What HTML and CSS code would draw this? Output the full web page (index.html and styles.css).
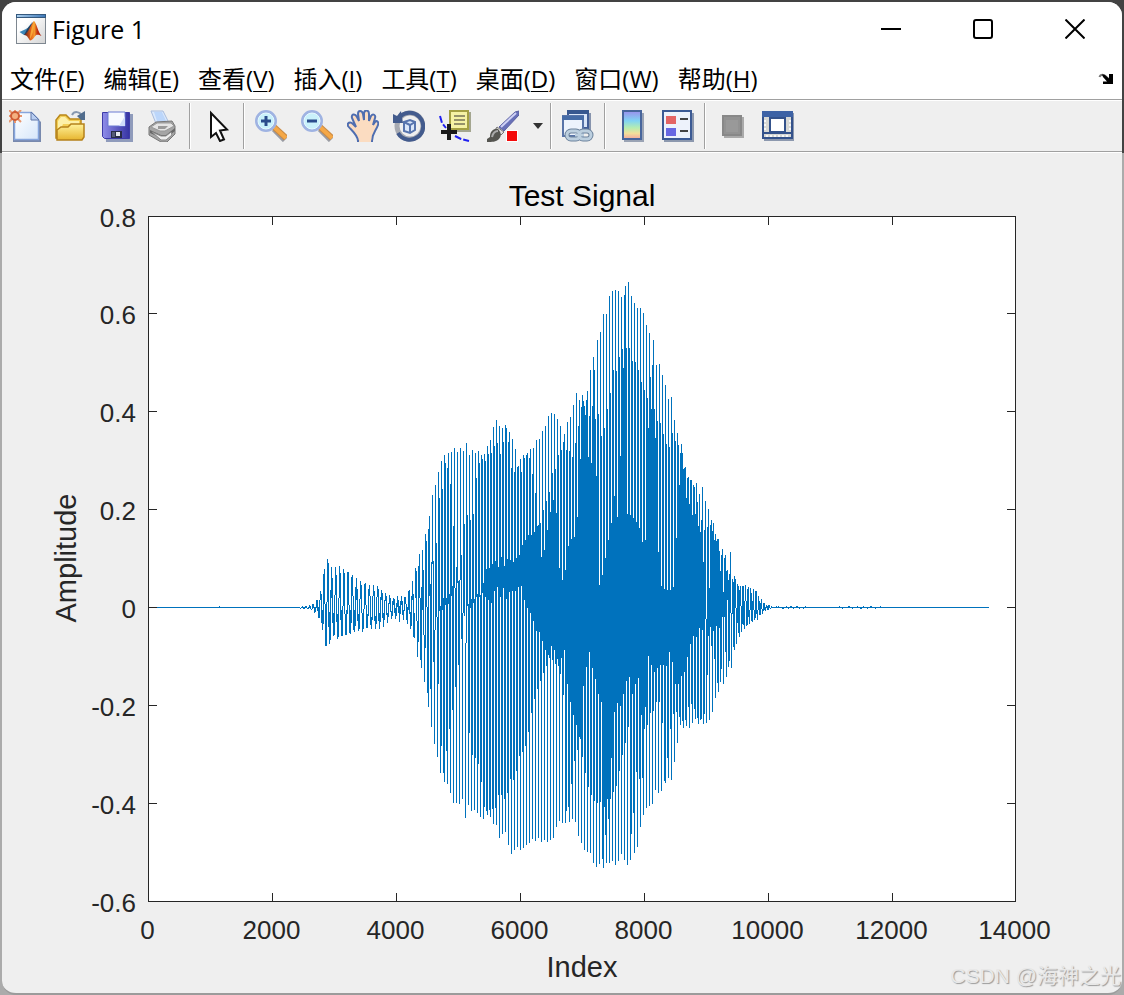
FILE: index.html
```html
<!DOCTYPE html>
<html lang="zh">
<head>
    <meta charset="UTF-8">
    <meta name="viewport" content="width=device-width, initial-scale=1.0">
    <title>Figure 1</title>
    <link rel="stylesheet" href="styles.css">
</head>
<body>
    <div class="window">
        <header class="title-bar">
            <svg class="logo" viewBox="0 0 30 30">
                <defs>
                    <linearGradient id="logoBg" x1="0" y1="0" x2="1" y2="1"><stop offset="0.3" stop-color="#fff"/><stop offset="1" stop-color="#d4d4d4"/></linearGradient>
                    <linearGradient id="logoBar"><stop offset="0" stop-color="#a9cdec"/><stop offset="1" stop-color="#3f79b8"/></linearGradient>
                    <linearGradient id="logoFire" x1="0" x2="1"><stop offset="0" stop-color="#5b1c1c"/><stop offset="0.4" stop-color="#e8641b"/><stop offset="0.6" stop-color="#f49a2c"/><stop offset="0.75" stop-color="#c3320f"/><stop offset="1" stop-color="#a8200d"/></linearGradient>
                </defs>
                <rect x="0.5" y="0.5" width="29" height="29" fill="url(#logoBg)" stroke="#7e8790"/>
                <rect x="0" y="0" width="30" height="4" fill="#35597e"/>
                <rect x="1" y="1" width="28" height="2" fill="url(#logoBar)"/>
                <path d="M3.500 18 9 15.500 11.500 14 14 11 16 8 14 15 11 19.500 8 21z" fill="#3d86b8"/>
                <path d="M8 21 11.500 14.500 14 11.500 17.500 7.500 15 18 12 21z" fill="#27405f"/>
                <path d="M8 21C12 20 15 10 18 7 20.500 9 22 18 25.500 22 22 20.500 20.500 20 18.500 23 17 25 15.500 26.500 14 26.500 12.500 25 12 21.500 8 21z" fill="url(#logoFire)"/>
                <path d="M18 7C19 12 17 20 14 25 14 20 16 12 18 7z" fill="#f7a636"/>
            </svg>
            <h1>Figure 1</h1>
            <div class="window-buttons">
                <button aria-label="最小化"><svg viewBox="0 0 20 20"><path d="M0 10h20"/></svg></button>
                <button aria-label="最大化"><svg viewBox="0 0 20 20"><rect x="1" y="1" width="18" height="18" rx="2"/></svg></button>
                <button aria-label="关闭"><svg viewBox="0 0 20 20"><path d="M0.500 0.500l19 19M19.500 0.500l-19 19"/></svg></button>
            </div>
        </header>

        <nav class="menu-bar">
            <button>文件(<u>F</u>)</button>
            <button>编辑(<u>E</u>)</button>
            <button>查看(<u>V</u>)</button>
            <button>插入(<u>I</u>)</button>
            <button>工具(<u>T</u>)</button>
            <button>桌面(<u>D</u>)</button>
            <button>窗口(<u>W</u>)</button>
            <button>帮助(<u>H</u>)</button>
            <button class="dock" aria-label="停靠">
                <svg viewBox="0 0 16 12"><path d="M1.500 4C2.500 1 6 1 8.500 4L11.500 7" fill="none" stroke="#777" stroke-width="2"/><path d="M4 1.500C7 1 8 3 11 5.500V1h4v10H5V8.500h4L5 4z" fill="#000"/></svg>
            </button>
        </nav>

        <div class="toolbar">
            <button aria-label="新建图窗">
                <svg viewBox="0 0 32 32">
                    <defs><linearGradient id="paper" x1="0" y1="0" x2="1" y2="1"><stop offset="0" stop-color="#fff"/><stop offset="1" stop-color="#d6e6fa"/></linearGradient></defs>
                    <path d="M7 4h17l8 8v20H4V8z" fill="#7889ad"/>
                    <path d="M5.500 3.500V29.500H29.500V9.500L22.500 2.500H6z" fill="url(#paper)" stroke="#86a5dc" stroke-width="1.500"/>
                    <path d="M22 2v8h8z" fill="#b7cdf1" stroke="#6177a8"/>
                    <path d="M0 0l12 12M12 0L0 12M6-1v14M-1 6h14" stroke="#e7976f" stroke-width="2"/>
                    <circle cx="6" cy="6" r="4" fill="#f4b080" stroke="#cf5b33" stroke-width="2"/>
                </svg>
            </button>
            <button aria-label="打开文件">
                <svg viewBox="0 0 32 32">
                    <defs><linearGradient id="folder" x1="0" y1="0" x2="0" y2="1"><stop offset="0" stop-color="#fff29b"/><stop offset="1" stop-color="#e7b52f"/></linearGradient></defs>
                    <path d="M1 28V10l4-5h6l4 4h11v19z" fill="#f3cf57" stroke="#b98719" stroke-width="1.500"/>
                    <path d="M3 26V11l3-4h4l4 4h10v3H8z" fill="#fdf0a8"/>
                    <path d="M2 30V20l4-3h7l3-3h13v13l-2 3z" fill="url(#folder)" stroke="#b5811b" stroke-width="1.500"/>
                    <path d="M17 5C19 1 25 1 27 6" fill="none" stroke="#8798b0" stroke-width="2"/>
                    <path d="M22 6l4 4h4V1z" fill="#526d8d"/>
                </svg>
            </button>
            <button aria-label="保存图窗">
                <svg viewBox="0 0 32 32">
                    <defs><linearGradient id="disk" x1="0" x2="1"><stop offset="0" stop-color="#8f8de9"/><stop offset="1" stop-color="#3533a2"/></linearGradient></defs>
                    <path d="M4 4h28v28H5z" fill="#8f9bbb"/>
                    <path d="M1.500 2.500h27v26h-25l-2-2z" fill="url(#disk)" stroke="#3d3ba8"/>
                    <path d="M7 2h17v14H7z" fill="#f7faff" stroke="#6b7ad3"/>
                    <path d="M18 16h6V6z" fill="#cfdcfa"/>
                    <path d="M10 21h11v7H10z" fill="#282c46"/>
                    <path d="M15 22h4v4h-4z" fill="#e6e7ee"/><path d="M11 22h3v5h-3z" fill="#555b75"/>
                </svg>
            </button>
            <button aria-label="打印图窗">
                <svg viewBox="0 0 32 32">
                    <path d="M4 1h12l6 12-12 3z" fill="#dbe9fc" stroke="#a9bcdc"/>
                    <path d="M7 2h8l4 9-8 3z" fill="#bcd6fa"/>
                    <path d="M2 17 9 12l16-1 3 5v8l-8 8h-6L2 25z" fill="#a5a5a5" stroke="#777"/>
                    <path d="M4 17 10 13h14l3 3-9 5h-5z" fill="#e4e4e4" stroke="#999"/>
                    <path d="M3 20l11 5h5l9-7v3l-9 7h-5L3 23z" fill="#696969"/>
                    <path d="M5 22l9 4h5l5-4 1 3-6 5h-5z" fill="#eee" stroke="#888"/>
                    <path d="M11 16h10l-3 3h-7z" fill="#999"/>
                </svg>
            </button>
            <span class="separator"></span>
            <button aria-label="编辑绘图">
                <svg viewBox="0 0 32 32">
                    <path d="M10 3V27l5-4 4 8 4-1.500-4-9 7-1z" fill="#fff" stroke="#111" stroke-width="2"/>
                </svg>
            </button>
            <span class="separator"></span>
            <button aria-label="放大">
                <svg viewBox="0 0 32 32">
                    <path d="M19 19l11 11" stroke="#9a9ca4" stroke-width="6"/>
                    <path d="M19 17l12 11" stroke="#c98a45" stroke-width="6"/>
                    <path d="M19 17l12 11" stroke="#f5a847" stroke-width="4"/>
                    <circle cx="11" cy="11" r="9.500" fill="#c9f1fb" stroke="#9fb3e2" stroke-width="3"/>
                    <circle cx="11" cy="11" r="8" fill="none" stroke="#e6faff"/>
                    <path d="M6 11h10M11 6v10" stroke="#2a4c8c" stroke-width="3"/>
                </svg>
            </button>
            <button aria-label="缩小">
                <svg viewBox="0 0 32 32">
                    <path d="M19 19l11 11" stroke="#9a9ca4" stroke-width="6"/>
                    <path d="M19 17l12 11" stroke="#c98a45" stroke-width="6"/>
                    <path d="M19 17l12 11" stroke="#f5a847" stroke-width="4"/>
                    <circle cx="11" cy="11" r="9.500" fill="#c9f1fb" stroke="#9fb3e2" stroke-width="3"/>
                    <circle cx="11" cy="11" r="8" fill="none" stroke="#e6faff"/>
                    <path d="M6 11h10" stroke="#2a4c8c" stroke-width="3"/>
                </svg>
            </button>
            <button aria-label="平移">
                <svg viewBox="0 0 32 32">
                    <path d="M11 31C11 25 4 20 1 16 0 13 3 11 6 14L9 17 5 8C4 4 8 3 10 7l2 4-1-7C11 0 15 0 16 4l1 6 0-7C18-1 22 0 22 4v7l2-5C26 3 29 5 28 8l-2 7 2-3c2-2 4 0 3 3-2 6-6 8-6 16z" fill="#fbdcc1" stroke="#4f6eb0" stroke-width="2"/>
                    <path d="M12 32C13 26 9 22 7 19h18l-1 13z" fill="#fbdcc1"/>
                </svg>
            </button>
            <button aria-label="三维旋转">
                <svg viewBox="0 0 32 32">
                    <circle cx="17" cy="16" r="13" fill="none" stroke="#a7aab2" stroke-width="5"/>
                    <path d="M6 8A13.500 13.500 0 1 1 5 23" fill="none" stroke="#435b8d" stroke-width="4"/>
                    <path d="M0 13V4l4 2 4-5 2 12z" fill="#435b8d"/>
                    <path d="M11 12l6-2 5 2v8l-5 3-6-2z" fill="#dbe7f9" stroke="#5875ae" stroke-width="2"/>
                    <path d="M11 12l6 3 5-3M17 15v8" fill="none" stroke="#5875ae" stroke-width="2"/>
                </svg>
            </button>
            <button aria-label="数据游标">
                <svg viewBox="0 0 32 32">
                    <path d="M12 2h20v20H13z" fill="#a4a690"/>
                    <path d="M11 1h18v18H11z" fill="#f5f2a4" stroke="#a4a042" stroke-width="2"/>
                    <path d="M15 6h11M15 10h11M15 14h11" stroke="#95926a" stroke-width="2"/>
                    <path d="M1 6l2 7 4 5M16 26l6 3 8 2" fill="none" stroke="#2020f0" stroke-width="2" stroke-dasharray="7 2"/>
                    <path d="M2 22h16M10 14v16" stroke="#1a1a1a" stroke-width="4"/>
                </svg>
            </button>
            <button class="brush" aria-label="刷亮数据">
                <svg viewBox="0 0 32 32">
                    <path d="M12 17 28 2l4-1v4L17 21z" fill="#6870b8" stroke="#5a5fa0"/>
                    <path d="M14 17 29 3" stroke="#cfd1f5" stroke-width="2"/>
                    <path d="M10 17l7 5-3 3-6-5z" fill="#ddd" stroke="#777"/>
                    <path d="M0 32v-3l3-2c0-5 3-9 8-8 3 3 4 7 1 10-3 3-7 3-12 3z" fill="#555550"/>
                    <path d="M5 27c1-4 3-6 6-6" stroke="#aaa" stroke-width="2" fill="none"/>
                    <rect x="19" y="20" width="12" height="12" fill="#fff"/><rect x="20" y="21" width="10" height="10" fill="#f40b0b"/>
                </svg>
            </button>
            <button class="drop-down" aria-label="刷亮选项">
                <svg viewBox="0 0 10 6"><path d="M0 0h10L5 6z" fill="#333"/></svg>
            </button>
            <span class="separator"></span>
            <button aria-label="链接绘图">
                <svg viewBox="0 0 32 32">
                    <path d="M6 1h20v17H6z" fill="#d9e5f7" stroke="#415d96" stroke-width="2"/>
                    <path d="M5 0h22v4H5z" fill="#37578f"/><path d="M28 3v17" stroke="#8794ad" stroke-width="2"/>
                    <path d="M1 6h20v20H1z" fill="#edf3fc" stroke="#5874a8" stroke-width="2"/>
                    <path d="M0 6h22v4H0z" fill="#456ba6"/>
                    <g fill="none" stroke="#6c829c" stroke-width="5"><rect x="5" y="21" width="13" height="8" rx="4"/><rect x="17" y="21" width="12" height="8" rx="4"/></g>
                    <g fill="none" stroke="#bccfdf" stroke-width="3"><rect x="5" y="21" width="13" height="8" rx="4"/><rect x="17" y="21" width="12" height="8" rx="4"/><path d="M13 25h9"/></g>
                </svg>
            </button>
            <span class="separator"></span>
            <button aria-label="插入颜色栏">
                <svg viewBox="0 0 32 32">
                    <defs><linearGradient id="colors" x1="0" y1="0" x2="0" y2="1"><stop offset="0" stop-color="#9a8eec"/><stop offset="0.350" stop-color="#80d4f4"/><stop offset="0.600" stop-color="#b5edb1"/><stop offset="0.800" stop-color="#f3df9b"/><stop offset="1" stop-color="#f3a69f"/></linearGradient></defs>
                    <path d="M8 3h20v29H8z" fill="#9aa3b4"/>
                    <path d="M7 1h18v28H7z" fill="url(#colors)" stroke="#47659c" stroke-width="2"/>
                </svg>
            </button>
            <button aria-label="插入图例">
                <svg viewBox="0 0 32 32">
                    <path d="M2 3h30v29H2z" fill="#8c98ae"/>
                    <path d="M1 1h28v28H1z" fill="#edf2fb" stroke="#3b5a94" stroke-width="2"/>
                    <path d="M4 6h10v8H4z" fill="#e36464"/><path d="M4 18h10v8H4z" fill="#6767e2"/>
                    <path d="M18 9h8M18 21h8" stroke="#444" stroke-width="2"/>
                </svg>
            </button>
            <span class="separator"></span>
            <button aria-label="隐藏绘图工具">
                <svg viewBox="0 0 32 32">
                    <path d="M8 7h20v21H8z" fill="#aaa"/><path d="M7 6h18v19H7z" fill="#929292" stroke="#888" stroke-width="2"/><path d="M10 10h12v12H10z" fill="#999"/>
                </svg>
            </button>
            <button aria-label="显示绘图工具">
                <svg viewBox="0 0 32 32">
                    <path d="M2 3h30v28H2z" fill="#8c98ae"/>
                    <path d="M1 2h29v26H1z" fill="#d7d8d5" stroke="#34528b" stroke-width="2"/>
                    <path d="M0 1h31v6H0z" fill="#3d62a5"/>
                    <path d="M3 10v12M28 10v12M4 26h23" stroke="#f8f8f8" stroke-width="2" stroke-dasharray="2 2"/>
                    <path d="M8 8h15v14H8z" fill="#fff" stroke="#34528b" stroke-width="2"/><path d="M1 23h29" stroke="#34528b" stroke-width="2"/>
                </svg>
            </button>
        </div>

        <main class="figure">
            <svg id="plot" viewBox="2 153 1120 840" role="img" aria-label="Test Signal">
                <rect class="axes" x="148.500" y="216.500" width="867" height="685"/>
                <path id="signal" class="signal"/>
                <path id="ticks" class="ticks"/>
                <g id="tickLabels" class="tick-labels"></g>
                <text class="plot-title" x="582" y="206">Test Signal</text>
                <text class="axis-label" x="582" y="977">Index</text>
                <text class="axis-label" transform="translate(76 558) rotate(-90)">Amplitude</text>
            </svg>
            <div class="watermark">CSDN @海神之光</div>
        </main>
    </div>
    <script src="plot.js"></script>
</body>
</html>
```

FILE: styles.css
```css
* {
    box-sizing: border-box;
}
body {
    margin: 0;
    min-height: 100vh;
    padding: 2px 2px 1px;
    display: flex;
    background: linear-gradient(#434343 153px, #ababab 153px);
    font-family: "Open Sans", "Noto Sans CJK SC", sans-serif;
    color: #000;
}
button {
    padding: 0;
    border: none;
    background: none;
    color: inherit;
    font: inherit;
}
.window {
    flex: 1;
    display: flex;
    flex-direction: column;
    overflow: hidden;
    background: #efefef;
    border-bottom: 2px solid #9b9b9b;
    border-radius: 14px;
}
.title-bar {
    display: flex;
    align-items: center;
    height: 54px;
    padding: 0 1px 0 14px;
    background: #fff;
}
.logo {
    width: 30px;
    height: 30px;
    margin-right: 6px;
}
.title-bar h1 {
    margin: 0;
    font-size: 25px;
    font-weight: 400;
    line-height: 32px;
}
.window-buttons {
    display: flex;
    margin-left: auto;
}
.window-buttons button {
    display: flex;
    align-items: center;
    justify-content: center;
    width: 92px;
    height: 54px;
}
.window-buttons svg {
    width: 20px;
    height: 20px;
    fill: none;
    stroke: #000;
    stroke-width: 2;
}
.menu-bar {
    display: flex;
    align-items: center;
    gap: 19px;
    height: 44px;
    padding: 2px 8px 0;
    border-bottom: 1px solid #a0a0a0;
    background: #fff;
    font-size: 24px;
    line-height: 32px;
    white-space: nowrap;
}
.menu-bar u {
    text-decoration-thickness: 1px;
    text-underline-offset: 3px;
}
.dock {
    display: flex;
    margin-left: auto;
}
.dock svg {
    width: 16px;
    height: 12px;
}
.toolbar {
    display: flex;
    height: 53px;
    border-top: 1px solid #fff;
    border-bottom: 1px solid #fff;
    box-shadow: inset 0 -1px #a0a0a0;
}
.toolbar button {
    display: flex;
    align-items: center;
    justify-content: center;
    width: 46px;
    height: 49px;
}
.toolbar .brush {
    width: 50px;
}
.toolbar .drop-down {
    width: 19px;
}
.toolbar svg {
    width: 32px;
    height: 32px;
}
.toolbar .drop-down svg {
    width: 10px;
    height: 6px;
}
.separator {
    width: 5px;
    height: 46px;
    margin: 2px 0 0 3px;
    border-left: 1px solid #a0a0a0;
    box-shadow: inset 1px 0 #fff;
}
.figure {
    position: relative;
    flex: 1;
}
#plot {
    display: block;
    width: 100%;
    font-family: "Liberation Sans", Arial, sans-serif;
}
.axes {
    fill: #fff;
    stroke: #262626;
    shape-rendering: crispEdges;
}
.ticks {
    stroke: #262626;
    shape-rendering: crispEdges;
}
.signal {
    fill: #0072bd;
    shape-rendering: crispEdges;
}
.tick-labels {
    font-size: 26px;
    fill: #262626;
}
.tick-labels .x,
.plot-title,
.axis-label {
    text-anchor: middle;
}
.tick-labels .y {
    text-anchor: end;
}
.plot-title {
    font-size: 30px;
}
.axis-label {
    font-size: 29px;
    fill: #262626;
}
.watermark {
    position: absolute;
    right: 1px;
    bottom: 1px;
    color: #e8e8e8;
    font-family: "Liberation Sans", "Noto Sans CJK SC", sans-serif;
    font-size: 21px;
    line-height: 32px;
    text-shadow: 1px 1px 1px #999;
}
```

FILE: plot.js
```js
// Signal extents, one entry per column, in thirds of a plot unit.
// top values count down from y = 260, bottom values from y = 590.
const runs = [
    {
        x: 300,
        top: [
            1044, 1041, 1038, 1041, 1041, 1038, 1038, 1044, 1041, 1035, 1038, 1047, 1032, 1032, 1041, 1041,
            1020, 1020, 1041, 1020, 993, 1002, 1050, 942, 927, 1032, 1026, 897, 909, 1056, 990,
            921, 954, 1060, 1005, 921, 945, 1062, 1014, 918, 939, 1050, 1038, 927, 939, 1062, 1050,
            936, 936, 1035, 1050, 951, 945, 1008, 1050, 981, 954, 987, 1062, 1017, 963, 975, 1059, 1047,
            972, 969, 1035, 1062, 987, 975, 1008, 1070, 1008, 975, 993, 1068, 1011, 978, 987, 1060, 1011,
            990, 999, 1060, 1020, 999, 1008, 1058, 1029, 1005, 1014, 1052, 1023, 1014, 1017, 1044, 1029,
            1008, 1020, 1038, 1023, 1008, 1023, 1050, 1011, 1011, 1032, 1041, 993, 990, 1056, 1008,
            963, 1002, 1059, 924, 933, 1083, 918, 882, 1014, 981, 870, 930, 1125, 822, 843, 1041,
            807, 768, 972, 906, 705, 903, 1110, 675, 849, 1071, 636, 714, 1038, 603, 687, 1014,
            585, 609, 1014, 624, 579, 1002, 672, 576, 978, 798, 564, 984, 921, 576, 963, 960,
            564, 885, 1059, 573, 792, 1150, 549, 765, 1032, 585, 780, 1017, 570, 762, 1017,
            579, 654, 1002, 573, 609, 1005, 585, 597, 969, 582, 603, 927, 558, 582, 924,
            540, 579, 912, 501, 558, 903, 480, 549, 921, 498, 582, 891, 504, 546, 918,
            495, 504, 897, 546, 516, 900, 624, 537, 906, 636, 567, 894, 621, 618, 885,
            597, 636, 855, 585, 594, 840, 585, 579, 825, 594, 567, 825, 642, 564, 816,
            699, 540, 798, 795, 537
        ],
        bottom: [
            57, 54, 54, 57, 57, 54, 54, 57, 57, 54, 57, 60, 57, 54, 69, 66,
            54, 63, 84, 84, 30, 99, 120, 102, 42, 168, 168, 36, 111, 162, 150,
            24, 99, 138, 135, 15, 96, 147, 141, 24, 90, 138, 138, 48, 72, 135, 135,
            72, 45, 129, 132, 99, 18, 120, 126, 108, 30, 93, 123, 117, 27, 69, 126, 117,
            57, 45, 114, 114, 78, 18, 105, 117, 90, 18, 93, 117, 102, 20, 93, 117, 96,
            30, 84, 111, 90, 33, 75, 99, 81, 42, 66, 87, 78, 45, 69, 87, 78,
            51, 69, 96, 72, 45, 75, 90, 63, 42, 90, 102, 60, 72, 117, 108,
            30, 141, 144, 24, 93, 201, 156, 24, 210, 234, 60, 135, 276, 174, 51, 309,
            351, 18, 297, 411, -79, 216, 462, 120, 81, 501, 282, 63, 549, 468, 60, 549,
            576, 45, 483, 582, 42, 417, 609, 18, 360, 639, -6, 291, 639, -20, 225, 642,
            -30, 147, 627, 69, 78, 684, 159, 48, 645, 429, 54, 663, 495, 39, 660,
            504, 21, 669, 522, 21, 681, 576, 9, 687, 651, 21, 663, 675, 30, 660,
            681, 39, 657, 702, 3, 654, 705, -9, 615, 744, 21, 615, 732, -6, 627,
            726, 27, 609, 765, 6, 567, 792, 3, 570, 780, 3, 543, 771, -9, 498,
            780, -12, 486, 774, 30, 468, 765, 54, 426, 759, 69, 369, 747, 93, 327,
            753, 123, 297, 744, 126
        ]
    },
    {
        x: 540,
        top: [
            790, 890, 513, 750, 870, 498, 723, 810, 468, 696, 756, 459, 639, 720, 462, 627, 759,
            477, 585, 924, 498, 570, 960, 546, 522, 930, 570, 486, 858, 573, 471, 837, 591,
            435, 831, 549, 399, 771, 498, 420, 597, 441, 405, 423, 438, 465, 420, 393, 591, 468,
            330, 609, 438, 291, 330, 477, 648, 240, 462, 975, 216, 528, 945, 162, 504, 894,
            162, 447, 840, 108, 399, 789, 93, 330, 708, 90, 333, 771, 93, 291, 588, 111, 267,
            324, 105, 78, 264, 762, 66, 264, 765, 108, 303, 774, 129, 306, 786, 144, 330, 804,
            144, 366, 846, 159, 390, 840, 195, 414, 504, 219, 351, 447, 315, 240, 447, 534, 315,
            483, 876, 312, 489, 978, 345, 522, 987, 375, 552, 990, 417, 561, 990, 411, 519, 981,
            480, 543, 834, 519, 555, 675, 579, 552, 579, 627, 624, 621, 714, 654, 651, 732, 660,
            660, 765, 675, 681, 762, 669, 726, 798, 702, 816, 780, 681, 906, 810, 723, 1077, 801,
            747, 984, 795, 780, 813, 789, 840, 822, 843, 837, 837, 873, 933, 885, 867, 996, 894,
            885, 933, 930, 960, 942, 876, 1059, 957, 966, 948, 957, 1044, 972, 978, 990, 978, 1038,
            978, 978, 1023, 975, 1023, 987, 981, 1050, 984, 999, 1023, 987, 1050, 993, 993, 1050,
            1008, 1023, 1029, 1017, 1047, 1029, 1029, 1041, 1035, 1038, 1035, 1035, 1044, 1038
        ],
        bottom: [
            273, 756, 153, 249, 750, 180, 228, 756, 195, 204, 750, 168, 210, 744, 180, 222, 711,
            207, 228, 693, 252, 204, 699, 315, 180, 699, 663, 282, 651, 696, 336, 582, 687,
            375, 513, 696, 405, 480, 738, 441, 447, 759, 501, 288, 780, 549, 231, 786, 591, 186,
            789, 615, 234, 819, 633, 267, 831, 639, 312, 822, 636, 336, 807, 834, 651, 735,
            819, 627, 687, 819, 627, 504, 813, 606, 366, 825, 588, 339, 813, 543, 348, 792, 495,
            312, 810, 459, 273, 825, 411, 261, 810, 732, 312, 669, 789, 282, 546, 771, 264, 567,
            711, 375, 564, 675, 417, 351, 654, 405, 198, 648, 369, 225, 642, 363, 246, 600, 336,
            234, 609, 336, 225, 603, 399, 225, 573, 579, 228, 504, 564, 186, 417, 570, 216, 372,
            516, 282, 366, 459, 282, 381, 405, 258, 393, 414, 246, 390, 408, 201, 351, 414, 162,
            342, 399, 138, 357, 387, 141, 384, 402, 114, 390, 387, 120, 402, 372, 87, 399, 255,
            138, 390, 111, 168, 366, 123, 207, 324, 108, 279, 306, 114, 276, 237, 81, 282, 81,
            186, 261, 30, 231, 213, 69, 234, 72, 171, 180, 54, 162, 99, 129, 141, 48, 126,
            102, 105, 117, 33, 108, 105, 81, 102, 60, 93, 96, 60, 90, 84, 72, 90,
            60, 75, 75, 57, 72, 63, 60, 63, 54, 60, 60, 54, 57, 54
        ]
    }
];

const bar = (x, y1, y2) => `M${x} ${y1}h1V${y2}h-1z`;

let d = 'M149 607h151v1h-151zM771 607h218v1h-218z';
runs.forEach(run => {
    run.top.forEach((top, i) => {
        const y1 = Math.round(260 + top / 3);
        const y2 = Math.round(590 + run.bottom[i] / 3);
        d += bar(run.x + i, y1, Math.max(y2, y1 + 1));
    });
});
// small ripples in the quiet part
[219, 776, 778, 786, 790, 791, 796, 797, 805, 839, 848, 849, 857, 863, 870, 871, 880].forEach(x => d += bar(x, 606, 608));
[782, 783, 788, 793, 799, 803, 842, 852, 860, 861, 867, 875].forEach(x => d += bar(x, 607, 609));
document.getElementById('signal').setAttribute('d', d);

let ticks = '';
let labels = '';
for (let i = 0; i <= 7; i++) {
    const x = Math.ceil(148 + i * 867 / 7) + 0.5;
    const y = Math.floor(216 + i * 685 / 7) + 0.5;
    ticks += `M${x} 217v8M${x} 901v-8M149 ${y}h8M1015 ${y}h-8`;
    labels += `<text class="x" x="${x - 1}" y="939">${i * 2000}</text>`;
    labels += `<text class="y" x="136" y="${y + 10}">${Number((0.8 - i * 0.2).toFixed(1))}</text>`;
}
document.getElementById('ticks').setAttribute('d', ticks);
document.getElementById('tickLabels').innerHTML = labels;
```
